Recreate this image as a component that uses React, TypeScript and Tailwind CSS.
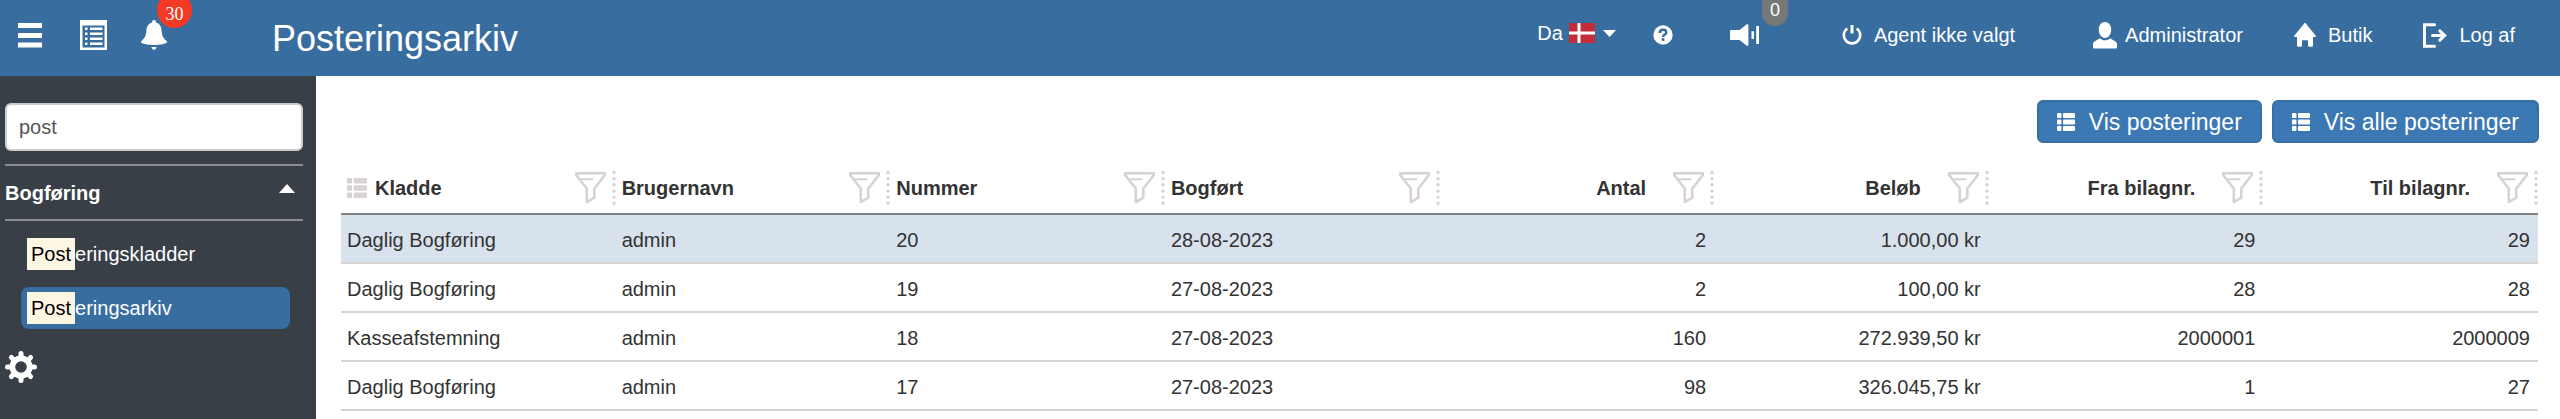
import type { ReactNode } from "react";

type IconProps = { className?: string };

const MenuIcon = ({ className }: IconProps) => (
  <svg className={className} viewBox="0 0 24 25" fill="currentColor" aria-hidden="true">
    <path d="M0 0h24v5H0zM0 10h24v5H0zM0 19.500h24v5H0z" />
  </svg>
);

const ListPageIcon = ({ className }: IconProps) => (
  <svg className={className} viewBox="0 0 27 30" fill="currentColor" aria-hidden="true">
    <path fillRule="evenodd" d="M0 0h27v30H0zM2.500 5.500V27.500h22V5.500z" />
    <path d="M5 7.500h2.500v2.500H5zM10 7.500h12.500v2.500H10zM5 12.500h2.500v2.500H5zM10 12.500h12.500v2.500H10zM5 17.500h2.500v2.500H5zM10 17.500h12.500v2.500H10zM5 22.500h2.500v2.500H5zM10 22.500h12.500v2.500H10z" />
  </svg>
);

const BellIcon = ({ className }: IconProps) => (
  <svg className={className} viewBox="0 0 26 30" fill="currentColor" aria-hidden="true">
    <path d="M11 2a2 2 0 0 1 4 0v.6c3.700 1 5.300 4 5.600 8 .3 5 1.500 7.500 4.700 10.200.7.600.9 1.700.2 2.200C23 24.300 18 25 13 25S3 24.300.500 23c-.7-.5-.5-1.600.2-2.200C3.900 18.100 5.100 15.600 5.400 10.600c.3-4 1.900-7 5.600-8zM10.300 27h5.400c-.4 1.500-1.400 2.700-2.700 2.700S10.700 28.500 10.300 27z" />
  </svg>
);

const HelpIcon = ({ className }: IconProps) => (
  <svg className={className} viewBox="0 0 20 20" aria-hidden="true">
    <circle cx="10" cy="10" r="9.700" fill="currentColor" />
    <path d="M6.800 8c0-2.200 1.400-3.300 3.300-3.300s3.200 1.100 3.200 2.700c0 2.300-3.200 2.100-3.200 4.600" fill="none" stroke="#386d9f" strokeWidth="2.500" />
    <path d="M8.700 13.200h2.700v2.700H8.700z" fill="#386d9f" />
  </svg>
);

const SpeakerIcon = ({ className }: IconProps) => (
  <svg className={className} viewBox="0 0 30 22" fill="currentColor" aria-hidden="true">
    <path d="M1 6h8.500l7-5.500c.9-.7 1.900-.3 1.900.7v19.600c0 1-1 1.400-1.900.7l-7-5.500H1a1 1 0 0 1-1-1V7a1 1 0 0 1 1-1zM21.500 7.200H24v7.800h-2.500zM26.200 2H29v18h-2.800z" />
  </svg>
);

const PowerIcon = ({ className }: IconProps) => (
  <svg className={className} viewBox="0 0 20 20" fill="none" stroke="currentColor" strokeWidth="2.600" aria-hidden="true">
    <path d="M5.300 3.500a8.200 8.200 0 1 0 9.400 0" />
    <path d="M10 0v8.500" strokeWidth="3" />
  </svg>
);

const UserIcon = ({ className }: IconProps) => (
  <svg className={className} viewBox="0 0 24 27" fill="currentColor" aria-hidden="true">
    <path d="M12 0c3.600 0 6.200 3 6.200 7.500S15.500 16 12 16s-6.200-4-6.200-8.500S8.400 0 12 0zM7 16.200c1.400 1.300 3 2.100 5 2.100s3.600-.8 5-2.100l5.500 3.300c1 .7 1.500 1.500 1.500 3v2.700c0 .8-.5 1.300-1.300 1.300H1.300C.500 26.500 0 26 0 25.200v-2.700c0-1.500.5-2.300 1.500-3z" />
  </svg>
);

const HomeIcon = ({ className }: IconProps) => (
  <svg className={className} viewBox="0 0 22 24" fill="currentColor" aria-hidden="true">
    <path d="M10.200.4a1 1 0 0 1 1.600 0l9.800 12c.7.900.4 1.600-.6 1.600h-2v8.500c0 .8-.5 1.200-1.200 1.200h-2.700c-.7 0-1.100-.4-1.100-1.200v-5.300H8v5.300c0 .8-.4 1.200-1.100 1.200H4.200c-.7 0-1.200-.4-1.200-1.200V14H1c-1 0-1.300-.7-.6-1.600z" />
  </svg>
);

const LogoutIcon = ({ className }: IconProps) => (
  <svg className={className} viewBox="0 0 24 25" fill="none" stroke="currentColor" strokeWidth="3" strokeLinecap="round" aria-hidden="true">
    <path d="M11.500 1.700h-10v21.600h10" />
    <path d="M9.500 12.500h12M16.800 7.800l4.900 4.700-4.900 4.700" />
  </svg>
);

const ListIcon = ({ className }: IconProps) => (
  <svg className={className} viewBox="0 0 18 18" fill="currentColor" aria-hidden="true">
    <rect x="0" y="0" width="4.500" height="5" rx="1" />
    <rect x="6" y="0" width="12" height="5" rx="1" />
    <rect x="0" y="6.500" width="4.500" height="5" rx="1" />
    <rect x="6" y="6.500" width="12" height="5" rx="1" />
    <rect x="0" y="13" width="4.500" height="5" rx="1" />
    <rect x="6" y="13" width="12" height="5" rx="1" />
  </svg>
);

const FunnelIcon = ({ className }: IconProps) => (
  <svg className={className} viewBox="0 0 31 32" fill="none" stroke="currentColor" strokeWidth="2.600" strokeLinejoin="round" strokeLinecap="round" aria-hidden="true">
    <path d="M1.300 1.300h28.400v1.900L19.300 16.500v9.200l-7.500 4.500V16.500L1.300 3.200z" />
    <path d="M6.500 7.300h11" strokeWidth="2" />
  </svg>
);

const GripIcon = ({ className }: IconProps) => (
  <svg className={className} viewBox="0 0 4 36" aria-hidden="true">
    <path d="M2 2.500v31" stroke="currentColor" strokeWidth="3.400" strokeLinecap="round" strokeDasharray="0 6.150" />
  </svg>
);

const GearIcon = ({ className }: IconProps) => (
  <svg className={className} viewBox="0 0 32 32" aria-hidden="true">
    <path d="M16 2.500v27M2.500 16h27M6.400 6.400l19.200 19.200M25.600 6.400L6.400 25.600" stroke="currentColor" strokeWidth="5" strokeLinecap="round" />
    <circle cx="16" cy="16" r="11.500" fill="currentColor" />
    <circle cx="16" cy="16" r="5.800" fill="#383f46" />
  </svg>
);

const DanishFlag = ({ className }: IconProps) => (
  <svg className={className} viewBox="0 0 26 20" role="img" aria-label="Dansk">
    <path d="M0 0h26v20H0z" fill="#c22d37" />
    <path d="M8.500 0h3v20h-3zM0 8.500h26v3H0z" fill="#fff" />
  </svg>
);

const columns = [
  { title: "Kladde", numeric: false },
  { title: "Brugernavn", numeric: false },
  { title: "Nummer", numeric: false },
  { title: "Bogført", numeric: false },
  { title: "Antal", numeric: true },
  { title: "Beløb", numeric: true },
  { title: "Fra bilagnr.", numeric: true },
  { title: "Til bilagnr.", numeric: true },
];

const rows = [
  ["Daglig Bogføring", "admin", "20", "28-08-2023", "2", "1.000,00 kr", "29", "29"],
  ["Daglig Bogføring", "admin", "19", "27-08-2023", "2", "100,00 kr", "28", "28"],
  ["Kasseafstemning", "admin", "18", "27-08-2023", "160", "272.939,50 kr", "2000001", "2000009"],
  ["Daglig Bogføring", "admin", "17", "27-08-2023", "98", "326.045,75 kr", "1", "27"],
];

const HeaderLink = ({ icon, children }: { icon: ReactNode; children: ReactNode }) => (
  <a href="#" className="flex items-center gap-3">
    {icon}
    <span>{children}</span>
  </a>
);

const ActionButton = ({ children }: { children: ReactNode }) => (
  <button
    type="button"
    className="flex h-[43px] items-center gap-[14px] rounded-md border-2 border-[#366fa6] bg-[#3c79b4] px-[18px] text-[23px] text-white"
  >
    <ListIcon className="size-[18px]" />
    {children}
  </button>
);

const MenuItem = ({ rest, active }: { rest: string; active?: boolean }) => (
  <a
    href="#"
    className={
      active
        ? "flex h-[42px] items-center rounded-lg bg-[#386d9f] px-[6px]"
        : "flex h-[42px] items-center rounded-lg px-[6px]"
    }
  >
    <mark className="bg-[#fdf6e3] px-1 leading-8 text-black">Post</mark>
    <span>{rest}</span>
  </a>
);

export default function App() {
  return (
    <div className="flex min-h-screen flex-col bg-white font-['Liberation_Sans',Arial,sans-serif] text-[20px] leading-6 text-[#333]">
      <header className="flex h-[76px] items-start justify-between bg-[#386d9f] pt-2 pr-[45px] pl-[18px] text-white">
        <div className="flex h-[60px] items-start">
          <div className="flex items-center pt-3">
            <button type="button" aria-label="Menu">
              <MenuIcon className="h-[25px] w-6" />
            </button>
            <button type="button" aria-label="Oversigt" className="ml-[38px]">
              <ListPageIcon className="h-[30px] w-[27px]" />
            </button>
            <button type="button" aria-label="Notifikationer" className="relative ml-[34px]">
              <BellIcon className="h-[30px] w-[26px]" />
              <span className="absolute -top-7 left-4 flex h-9 w-[35px] items-end justify-center rounded-[50%] bg-[#f43a24] pb-[2px] font-['Liberation_Serif',serif] text-[18px] leading-6">
                30
              </span>
            </button>
          </div>
          <h1 className="ml-[105px] pt-[9px] text-[36px] leading-[44px]">Posteringsarkiv</h1>
        </div>
        <nav className="flex h-[54px] items-center">
          <button type="button" className="flex items-center pb-1">
            Da
            <DanishFlag className="ml-[6px] h-5 w-[26px]" />
            <svg className="ml-2 h-[7px] w-[13px]" viewBox="0 0 13 7" fill="currentColor" aria-hidden="true">
              <path d="M0 0h13L6.500 7z" />
            </svg>
          </button>
          <button type="button" aria-label="Hjælp" className="ml-[37px]">
            <HelpIcon className="size-5" />
          </button>
          <button type="button" aria-label="Lyd" className="relative ml-[57px]">
            <SpeakerIcon className="h-[22px] w-[30px]" />
            <span className="absolute -top-[34px] left-8 flex h-[36px] w-[26px] items-end justify-center rounded-full bg-[#777] pb-1 text-[18px]">
              0
            </span>
          </button>
          <div className="ml-[82px] flex items-center gap-[78px]">
            <HeaderLink icon={<PowerIcon className="size-5" />}>Agent ikke valgt</HeaderLink>
            <div className="flex items-center gap-[51px]">
              <a href="#" className="flex items-center gap-2">
                <UserIcon className="h-[27px] w-6" />
                <span>Administrator</span>
              </a>
              <HeaderLink icon={<HomeIcon className="h-6 w-[22px]" />}>Butik</HeaderLink>
              <HeaderLink icon={<LogoutIcon className="h-[25px] w-6" />}>Log af</HeaderLink>
            </div>
          </div>
        </nav>
      </header>

      <div className="flex flex-1">
        <aside className="w-[316px] shrink-0 bg-[#383f46] pt-[27px] pr-[13px] pl-[5px] text-white">
          <input
            type="text"
            aria-label="Søg i menu"
            defaultValue="post"
            className="block h-12 w-full rounded-md border-2 border-[#ccc] bg-white px-3 text-[#555]"
          />
          <button
            type="button"
            className="mt-[13px] flex h-[57px] w-full items-center justify-between border-y-2 border-[#8b8d8f] pr-2 font-bold"
          >
            Bogføring
            <svg className="mb-2 h-[9px] w-4" viewBox="0 0 16 9" fill="currentColor" aria-hidden="true">
              <path d="M0 9h16L8 0z" />
            </svg>
          </button>
          <nav className="mt-3 flex flex-col gap-3 pr-[13px] pl-4">
            <MenuItem rest="eringskladder" />
            <MenuItem rest="eringsarkiv" active />
          </nav>
          <button type="button" aria-label="Indstillinger" className="mt-[22px] block">
            <GearIcon className="size-8" />
          </button>
        </aside>

        <main className="min-w-0 flex-1 pt-6 pl-[25px]">
          <div className="flex justify-end gap-[10px] pr-[21px]">
            <ActionButton>Vis posteringer</ActionButton>
            <ActionButton>Vis alle posteringer</ActionButton>
          </div>
          <div className="pt-[25px] pr-[22px]">
            <table className="w-full table-fixed border-collapse">
              <thead>
                <tr className="h-[46px] border-b-2 border-[#808386]">
                  {columns.map((col, i) => (
                    <th key={col.title} scope="col" className="p-0 pb-[6px] pl-[6px]">
                      <div className="flex items-center">
                        {i === 0 && <ListIcon className="mr-2 size-5 text-[#d9d2d2]" />}
                        <span className={col.numeric ? "flex-1 pr-[27px] text-right" : "flex-1 text-left"}>
                          {col.title}
                        </span>
                        <button type="button" aria-label={`Filtrer ${col.title}`} className="text-[#d9d2d2]">
                          <FunnelIcon className="h-8 w-[31px]" />
                        </button>
                        <GripIcon className="ml-[6px] h-9 w-1 text-[#d9d2d2]" />
                      </div>
                    </th>
                  ))}
                </tr>
              </thead>
              <tbody>
                {rows.map((row, r) => (
                  <tr
                    key={row[2]}
                    className={
                      r === 0
                        ? "h-[49px] border-b-2 border-[#d9d2d2] bg-[#d8e2ec]"
                        : "h-[49px] border-b-2 border-[#d9d2d2]"
                    }
                  >
                    {row.map((cell, c) => (
                      <td
                        key={columns[c].title}
                        className={columns[c].numeric ? "p-0 pt-[2px] pr-2 text-right" : "p-0 pt-[2px] pl-[6px]"}
                      >
                        {cell}
                      </td>
                    ))}
                  </tr>
                ))}
              </tbody>
            </table>
          </div>
        </main>
      </div>
    </div>
  );
}
